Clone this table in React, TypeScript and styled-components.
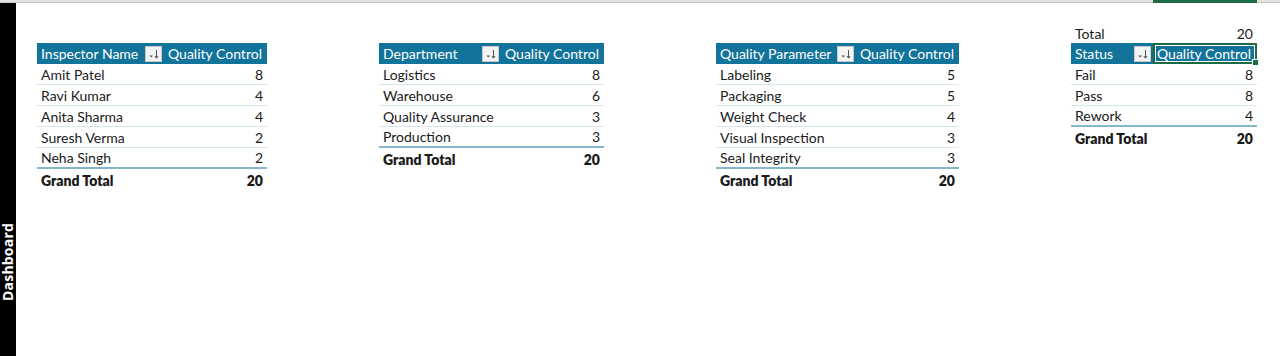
import React from "react";
import styled, { createGlobalStyle } from "styled-components";

const HEADER_BLUE = "#12739b";
const ROW_LINE = "#d6e6ef";
const TOTAL_LINE = "#85b6ce";
const EXCEL_GREEN = "#1d6b44";

type PivotRow = { label: string; value: number };

type PivotTable = {
  field: string;
  firstWidth: number;
  secondWidth: number;
  rows: PivotRow[];
  total?: number;
  selected?: boolean;
};

const tables: PivotTable[] = [
  {
    field: "Inspector Name",
    firstWidth: 127,
    secondWidth: 103,
    rows: [
      { label: "Amit Patel", value: 8 },
      { label: "Ravi Kumar", value: 4 },
      { label: "Anita Sharma", value: 4 },
      { label: "Suresh Verma", value: 2 },
      { label: "Neha Singh", value: 2 },
    ],
  },
  {
    field: "Department",
    firstWidth: 122,
    secondWidth: 103,
    rows: [
      { label: "Logistics", value: 8 },
      { label: "Warehouse", value: 6 },
      { label: "Quality Assurance", value: 3 },
      { label: "Production", value: 3 },
    ],
  },
  {
    field: "Quality Parameter",
    firstWidth: 140,
    secondWidth: 103,
    rows: [
      { label: "Labeling", value: 5 },
      { label: "Packaging", value: 5 },
      { label: "Weight Check", value: 4 },
      { label: "Visual Inspection", value: 3 },
      { label: "Seal Integrity", value: 3 },
    ],
  },
  {
    field: "Status",
    firstWidth: 82,
    secondWidth: 104,
    total: 20,
    selected: true,
    rows: [
      { label: "Fail", value: 8 },
      { label: "Pass", value: 8 },
      { label: "Rework", value: 4 },
    ],
  },
];

function FilterIcon() {
  return (
    <FilterButton>
      <svg width="14" height="14" viewBox="0 0 14 14">
        <path d="M2.5 8.5 L6 8.5 L4.25 10.5 Z" fill="#555" />
        <path d="M9.5 3 L9.5 11" stroke="#555" strokeWidth="1" />
        <path d="M7.8 9 L9.5 11.2 L11.2 9" stroke="#555" strokeWidth="1" fill="none" />
      </svg>
    </FilterButton>
  );
}

function Pivot({ table }: { table: PivotTable }) {
  const grand = table.rows.reduce((sum, r) => sum + r.value, 0);
  const last = table.rows.length - 1;
  return (
    <Grid $first={table.firstWidth} $second={table.secondWidth}>
      {table.total !== undefined ? (
        <>
          <Cell>Total</Cell>
          <Cell $right>{table.total}</Cell>
        </>
      ) : (
        <>
          <Cell />
          <Cell />
        </>
      )}
      <HeaderCell>
        <span>{table.field}</span>
        <FilterIcon />
      </HeaderCell>
      <HeaderCell $selected={table.selected}>
        Quality Control
        {table.selected && <FillHandle />}
      </HeaderCell>
      {table.rows.map((r, i) => (
        <React.Fragment key={r.label}>
          <Cell $line={i === last ? "total" : "row"}>{r.label}</Cell>
          <Cell $line={i === last ? "total" : "row"} $right>
            {r.value}
          </Cell>
        </React.Fragment>
      ))}
      <Cell $bold>Grand Total</Cell>
      <Cell $bold $right>
        {grand}
      </Cell>
    </Grid>
  );
}

export default function App() {
  return (
    <>
      <GlobalStyle />
      <Page>
        <TopStrip>
          <SelectedColumn />
        </TopStrip>
        <Body>
          <Sidebar>
            <SidebarLabel>Dashboard</SidebarLabel>
          </Sidebar>
          <Sheet>
            {tables.map((t) => (
              <Pivot key={t.field} table={t} />
            ))}
          </Sheet>
        </Body>
      </Page>
    </>
  );
}

const GlobalStyle = createGlobalStyle`
  html, body {
    margin: 0;
    padding: 0;
    background: #ffffff;
  }

  body {
    font-family: Lato, "Liberation Sans", Arial, sans-serif;
    color: #1a1a1a;
  }
`;

const Page = styled.div`
  width: 1280px;
  height: 356px;
  display: flex;
  flex-direction: column;
  overflow: hidden;
`;

const TopStrip = styled.div`
  height: 2px;
  background: #e3e3e3;
  border-bottom: 1px solid #c3c3c3;
  display: flex;
`;

const SelectedColumn = styled.div`
  margin-left: 1153px;
  width: 104px;
  height: 3px;
  background: ${EXCEL_GREEN};
`;

const Body = styled.div`
  flex: 1;
  display: flex;
`;

const Sidebar = styled.aside`
  width: 16px;
  background: #000000;
  display: flex;
  flex-direction: column;
  justify-content: flex-end;
  align-items: center;
  padding-bottom: 55px;
`;

const SidebarLabel = styled.span`
  writing-mode: vertical-rl;
  transform: rotate(180deg);
  color: #ffffff;
  font-family: "Open Sans", "Liberation Sans", sans-serif;
  font-weight: 700;
  font-size: 14px;
  line-height: 16px;
  letter-spacing: 0.2px;
`;

const Sheet = styled.main`
  display: flex;
  align-items: flex-start;
  gap: 112px;
  padding: 19px 0 0 21px;
`;

const Grid = styled.div<{ $first: number; $second: number }>`
  display: grid;
  grid-template-columns: ${(p) => p.$first}px ${(p) => p.$second}px;
  grid-auto-rows: 21px;
  font-size: 14px;
`;

const Cell = styled.div<{
  $right?: boolean;
  $bold?: boolean;
  $line?: "row" | "total";
}>`
  box-sizing: border-box;
  display: flex;
  align-items: flex-end;
  justify-content: ${(p) => (p.$right ? "flex-end" : "flex-start")};
  padding: 0 ${(p) => (p.$right ? "4px" : "0")} 2px ${(p) => (p.$right ? "0" : "4px")};
  line-height: 1;
  font-weight: ${(p) => (p.$bold ? 800 : 400)};
  white-space: nowrap;
  border-bottom: ${(p) =>
    p.$line === "total"
      ? `2px solid ${TOTAL_LINE}`
      : p.$line === "row"
      ? `1px solid ${ROW_LINE}`
      : "none"};
`;

const HeaderCell = styled.div<{ $selected?: boolean }>`
  position: relative;
  box-sizing: border-box;
  display: flex;
  align-items: center;
  justify-content: space-between;
  padding: 0 2px 0 4px;
  background: ${HEADER_BLUE};
  color: #ffffff;
  white-space: nowrap;
  line-height: 1;
  border: ${(p) => (p.$selected ? `2px solid ${EXCEL_GREEN}` : "none")};
  padding-left: ${(p) => (p.$selected ? "2px" : "4px")};
  box-shadow: ${(p) => (p.$selected ? "inset 0 0 0 1px #ffffff" : "none")};
`;

const FilterButton = styled.span`
  box-sizing: border-box;
  width: 17px;
  height: 16px;
  display: flex;
  align-items: center;
  justify-content: center;
  background: #f4f4f4;
  border: 1px solid #c9c9c9;
`;

const FillHandle = styled.span`
  position: absolute;
  right: -4px;
  bottom: -4px;
  width: 5px;
  height: 5px;
  background: ${EXCEL_GREEN};
  border: 1px solid #ffffff;
`;
